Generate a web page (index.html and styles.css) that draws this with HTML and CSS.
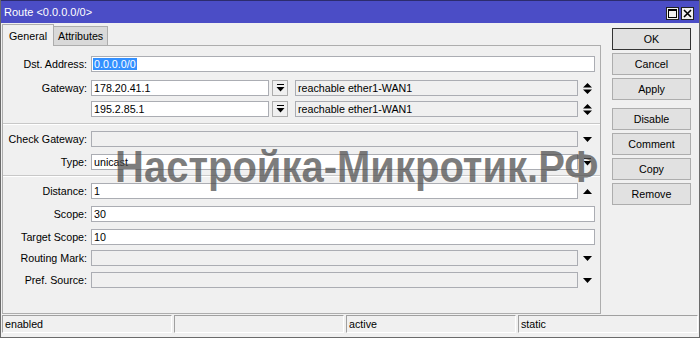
FILE: index.html
```html
<!DOCTYPE html>
<html>
<head>
<meta charset="utf-8">
<link rel="stylesheet" href="styles.css">
</head>
<body>
<div class="window">
  <div class="titlebar">
    <span class="title">Route &lt;0.0.0.0/0&gt;</span>
    <div class="winctl">
      <span class="wbtn"><svg width="9" height="9" viewBox="0 0 9 9"><rect x="0.5" y="0.5" width="8" height="8" fill="none" stroke="#000"/><line x1="0" y1="1.5" x2="9" y2="1.5" stroke="#000"/></svg></span>
      <span class="wbtn"><svg width="9" height="9" viewBox="0 0 9 9"><path d="M1 1 L8 8 M8 1 L1 8" stroke="#000" stroke-width="1.6"/></svg></span>
    </div>
  </div>
  <div class="body">
    <div class="main">
      <div class="tabs">
        <div class="tab active">General</div>
        <div class="tab">Attributes</div>
      </div>
      <div class="panel">
        <div class="row r-dst">
          <label class="lbl">Dst. Address:</label>
          <div class="inp full"><span class="sel">0.0.0.0/0</span></div>
        </div>
        <div class="row r-gw1">
          <label class="lbl">Gateway:</label>
          <div class="inp gw">178.20.41.1</div>
          <div class="sbtn"><svg width="9" height="8" viewBox="0 0 9 8"><rect x="1" y="0" width="7" height="1" fill="#000"/><path d="M0.5 3 H8.5 L4.5 7.5 Z" fill="#000"/></svg></div>
          <div class="inp stat">reachable ether1-WAN1</div>
          <div class="arr"><svg width="9" height="11" viewBox="0 0 9 11"><path d="M4.5 0 L9 4.5 H0 Z M0 6.5 H9 L4.5 11 Z" fill="#000"/></svg></div>
        </div>
        <div class="row r-gw2">
          <label class="lbl"></label>
          <div class="inp gw">195.2.85.1</div>
          <div class="sbtn"><svg width="9" height="8" viewBox="0 0 9 8"><rect x="1" y="0" width="7" height="1" fill="#000"/><path d="M0.5 3 H8.5 L4.5 7.5 Z" fill="#000"/></svg></div>
          <div class="inp stat">reachable ether1-WAN1</div>
          <div class="arr"><svg width="9" height="11" viewBox="0 0 9 11"><path d="M4.5 0 L9 4.5 H0 Z M0 6.5 H9 L4.5 11 Z" fill="#000"/></svg></div>
        </div>
        <div class="sep"></div>
        <div class="row r-chk">
          <label class="lbl">Check Gateway:</label>
          <div class="inp mid dis"></div>
          <div class="arr"><svg width="9" height="5" viewBox="0 0 9 5"><path d="M0 0 H9 L4.5 5 Z" fill="#000"/></svg></div>
        </div>
        <div class="row r-type">
          <label class="lbl">Type:</label>
          <div class="inp mid">unicast</div>
          <div class="arr"><svg width="9" height="8" viewBox="0 0 9 8"><rect x="1" y="0" width="7" height="1" fill="#000"/><path d="M0.5 3 H8.5 L4.5 7.5 Z" fill="#000"/></svg></div>
        </div>
        <div class="sep sep2"></div>
        <div class="row r-dist">
          <label class="lbl">Distance:</label>
          <div class="inp mid">1</div>
          <div class="arr"><svg width="9" height="5" viewBox="0 0 9 5"><path d="M0 5 H9 L4.5 0 Z" fill="#000"/></svg></div>
        </div>
        <div class="row r-scope">
          <label class="lbl">Scope:</label>
          <div class="inp full">30</div>
        </div>
        <div class="row r-tscope">
          <label class="lbl">Target Scope:</label>
          <div class="inp full">10</div>
        </div>
        <div class="row r-rmark">
          <label class="lbl">Routing Mark:</label>
          <div class="inp mid dis"></div>
          <div class="arr"><svg width="9" height="5" viewBox="0 0 9 5"><path d="M0 0 H9 L4.5 5 Z" fill="#000"/></svg></div>
        </div>
        <div class="row r-pref">
          <label class="lbl">Pref. Source:</label>
          <div class="inp mid dis"></div>
          <div class="arr"><svg width="9" height="5" viewBox="0 0 9 5"><path d="M0 0 H9 L4.5 5 Z" fill="#000"/></svg></div>
        </div>
      </div>
    </div>
    <div class="buttons">
      <div class="btn default">OK</div>
      <div class="btn">Cancel</div>
      <div class="btn">Apply</div>
      <div class="btn gapped">Disable</div>
      <div class="btn">Comment</div>
      <div class="btn">Copy</div>
      <div class="btn">Remove</div>
    </div>
  </div>
  <div class="statusbar">
    <div class="seg">enabled</div>
    <div class="seg"></div>
    <div class="seg">active</div>
    <div class="seg last">static</div>
  </div>
  <div class="watermark">Настройка-Микротик.РФ</div>
</div>
</body>
</html>
```
FILE: styles.css
```css
* { box-sizing: border-box; }
html, body { margin: 0; padding: 0; }
body {
  width: 700px;
  height: 338px;
  overflow: hidden;
  font-family: "Liberation Sans", Arial, sans-serif;
  font-size: 10.7px;
  color: #000;
  background: #f0f0f0;
}
.window {
  position: relative;
  width: 700px;
  height: 338px;
  background: #f0f0f0;
  border: 1px solid #6a6a6a;
  border-top: none;
  display: flex;
  flex-direction: column;
}
.titlebar {
  height: 23px;
  background: #4b4dc6;
  border-top: 1px solid #2c2c6e;
  display: flex;
  align-items: center;
  justify-content: space-between;
  padding: 0 5px 0 3px;
  flex: none;
}
.title { color: #fff; font-size: 11px; }
.winctl { display: flex; gap: 2px; margin-top: 2px; }
.wbtn {
  width: 13px; height: 13px;
  background: #f0f0f0;
  border: 1px solid #222;
  display: flex; align-items: center; justify-content: center;
}
.body { display: flex; flex: none; height: 291px; }
.main { width: 600px; padding-left: 1px; display: flex; flex-direction: column; }
.tabs { display: flex; height: 22px; align-items: flex-end; }
.tab {
  height: 19px;
  padding: 3px 4px 0 4px;
  background: #d9d9d9;
  border: 1px solid #adadad;
  border-bottom: none;
  margin-left: -1px;
}
.tab.active {
  height: 22px;
  padding: 5px 6px 0 6px;
  background: #f0f0f0;
  margin-left: 0;
  margin-bottom: -1px;
  position: relative;
  z-index: 1;
}
.panel {
  height: 269px;
  border: 1px solid #adadad;
  background: #f0f0f0;
  display: flex;
  flex-direction: column;
  padding-top: 10px;
}
.row { display: flex; align-items: center; height: 16px; }
.lbl {
  width: 86px;
  text-align: right;
  padding-right: 2px;
  flex: none;
  white-space: nowrap;
}
.inp {
  height: 16px;
  border: 1px solid #abadb3;
  background: #fff;
  margin-left: 2px;
  padding: 1px 3px 0 2px;
  line-height: 13px;
  white-space: nowrap;
  overflow: hidden;
  flex: none;
}
.inp.dis { background: #f0f0f0; }
.inp.full { width: 504px; }
.inp.mid { width: 487px; }
.inp.gw { width: 178px; }
.inp.stat { width: 283px; margin-left: 7px; background: #f0f0f0; }
.sel { background: #3390ff; color: #fff; padding: 0 1px; margin-left: -1px; }
.sbtn {
  width: 16px; height: 16px;
  margin-left: 3px;
  border: 1px solid #adadad;
  background: #f0f0f0;
  display: flex; align-items: center; justify-content: center;
}
.arr {
  width: 17px;
  display: flex; align-items: center; justify-content: center;
  padding-left: 2px;
}
.r-gw1 { margin-top: 8px; }
.r-gw2 { margin-top: 5px; }
.sep { height: 2px; background: #c8c8c8; margin: 6px 0 0 0; border-bottom: 1px solid #fff; flex: none; }
.sep2 { margin-top: 5px; }
.r-chk { margin-top: 6px; }
.r-type { margin-top: 7px; }
.r-dist { margin-top: 6px; }
.r-scope { margin-top: 7px; }
.r-tscope { margin-top: 7px; }
.r-rmark { margin-top: 5px; }
.r-pref { margin-top: 6px; }
.buttons {
  display: flex; flex-direction: column;
  padding: 5px 0 0 11px;
  gap: 3px;
}
.btn {
  width: 79px; height: 22px;
  border: 1px solid #adadad;
  background: #e1e1e1;
  display: flex; align-items: center; justify-content: center;
}
.btn.default { border: 1px solid #333; }
.btn.gapped { margin-top: 5px; }
.statusbar {
  display: flex;
  gap: 2px;
  padding: 1px 1px 0 1px;
  height: 21px;
}
.seg {
  width: 170px;
  height: 18px;
  border: 1px solid #a0a0a0;
  border-right-color: #fff;
  border-bottom-color: #fff;
  padding: 2px 3px 0 2px;
}
.seg.last { flex: 1; }
.watermark {
  position: absolute;
  left: 114px;
  top: 142px;
  font-size: 40px;
  font-weight: bold;
  color: rgba(75, 75, 75, 0.72);
  white-space: nowrap;
  letter-spacing: 0;
  transform: scaleY(1.1);
  transform-origin: left top;
}
```
